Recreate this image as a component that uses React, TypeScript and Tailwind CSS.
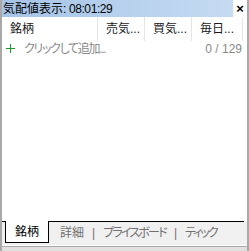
import { memo } from "react";

const jp = { fontFamily: '"Liberation Sans", "Noto Sans CJK JP", sans-serif' };

/**
 * 気配値表示 window
 */
const App = memo(() => {
  const columns = [
    { label: "銘柄", width: "w-[96px]" },
    { label: "売気...", width: "w-[47px]" },
    { label: "買気...", width: "w-[47px]" },
    { label: "毎日...", width: "w-[51px]" },
  ];

  return (
    <div
      className="w-[249px] h-[251px] bg-[#f0f0f0] flex flex-col border-x-2 border-[#a9a9a9] text-[12px] leading-none overflow-hidden whitespace-nowrap [font-feature-settings:'palt']"
      style={jp}
    >
      {/* Title bar */}
      <div className="h-[17px] flex items-stretch shrink-0">
        <div className="flex-1 flex items-center pl-[1px] bg-gradient-to-r from-[#a6c4e7] to-[#c5dbf2] text-black text-[12px]">
          <span>気配値表示</span>
          <span className="tracking-[-0.4px]">: 08:01:29</span>
        </div>
        <div className="w-[14px] bg-white flex items-center justify-center text-[13px] font-bold text-black">
          ×
        </div>
      </div>

      {/* List */}
      <div className="flex-1 bg-white flex flex-col">
        <div className="h-[24px] flex items-stretch">
          {columns.map((col, i) => (
            <div
              key={i}
              className={`${col.width} flex items-center pl-[8px] border-r border-[#e5e5e5] text-[#1a1a1a]`}
            >
              {col.label}
            </div>
          ))}
        </div>
        <div className="h-[15px] flex items-center justify-between pl-[4px] pr-[5px] text-[#8a8a8a]">
          <div className="flex items-center">
            <svg width="9" height="9" viewBox="0 0 9 9" className="mr-[9px]">
              <path d="M4.5 0V9M0 4.5H9" stroke="#1e9a2e" strokeWidth="1" />
            </svg>
            <span className="tracking-[-1.3px]">クリックして追加...</span>
          </div>
          <span>0 / 129</span>
        </div>
      </div>

      {/* Tabs */}
      <div className="h-[22px] flex items-stretch shrink-0 bg-[#f0f0f0]">
        <div className="w-[3px] border-t border-black" />
        <div className="w-[44px] bg-white border-x border-b border-black flex items-center justify-center text-black">
          銘柄
        </div>
        <div className="flex-1 border-t border-black flex items-center text-[#707070] pl-[11px]">
          <span>詳細</span>
          <span className="mx-[8px]">|</span>
          <span className="tracking-[-1.8px]">プライスボード</span>
          <span className="mx-[8px]">|</span>
          <span className="tracking-[-2px]">ティック</span>
        </div>
        <div className="w-[3px]" />
      </div>
      <div className="h-[2px] shrink-0" />
      <div className="h-[1px] bg-white shrink-0" />
      <div className="h-[5px] bg-[#e0e0e0] shrink-0 border-t border-[#a9a9a9]" />
    </div>
  );
});

App.displayName = "App";

export default App;
